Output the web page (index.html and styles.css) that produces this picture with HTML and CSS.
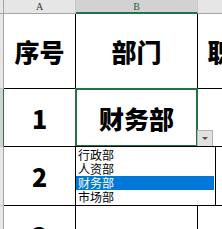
FILE: index.html
```html
<!DOCTYPE html>
<html lang="zh">
<head>
    <meta charset="UTF-8">
    <meta name="viewport" content="width=device-width, initial-scale=1.0">
    <title>部门</title>
    <link rel="stylesheet" href="styles.css">
</head>
<body>
    <div class="sheet">
        <div class="grid">
            <div class="corner"></div>
            <div class="colhead">A</div>
            <div class="colhead active">B</div>
            <div class="colhead">C</div>

            <div class="rowhead"></div>
            <div class="cell title">序号</div>
            <div class="cell title">部门</div>
            <div class="cell title">职位</div>

            <div class="rowhead active"></div>
            <div class="cell">1</div>
            <div class="cell selected">财务部</div>
            <div class="cell"></div>

            <div class="rowhead"></div>
            <div class="cell">2</div>
            <div class="cell"></div>
            <div class="cell"></div>

            <div class="rowhead"></div>
            <div class="cell">3</div>
            <div class="cell"></div>
            <div class="cell"></div>
        </div>

        <div class="dropBtn"></div>
        <ul class="dropList">
            <li>行政部</li>
            <li>人资部</li>
            <li class="on">财务部</li>
            <li>市场部</li>
        </ul>
    </div>
</body>
</html>
```

FILE: styles.css
```css
body {
    margin: 0;
    background: #fff;
}
.sheet {
    position: relative;
    width: 222px;
    height: 229px;
    overflow: hidden;
}
.grid {
    display: grid;
    grid-template-columns: 4px 72px 122px 70px;
    grid-template-rows: 14px 75px 58px 59px 58px;
}
.corner, .colhead, .rowhead {
    background: #e6e6e6;
    box-sizing: border-box;
}
.corner {
    border-right: 1px solid #a6a6a6;
    border-bottom: 1px solid #a6a6a6;
}
.colhead {
    border-right: 1px solid #c8c8c8;
    border-bottom: 1px solid #a6a6a6;
    font-family: "Liberation Serif", serif;
    font-size: 10px;
    line-height: 13px;
    text-align: center;
    color: #333;
}
.colhead.active {
    background: #d2d2d2;
    border-bottom: 2px solid #217346;
    color: #1e5e3a;
}
.rowhead {
    border-right: 1px solid #a6a6a6;
    border-bottom: 1px solid #c8c8c8;
}
.rowhead.active {
    background: #d2d2d2;
    border-right: 1px solid #217346;
}
.cell {
    position: relative;
    box-sizing: border-box;
    border-right: 1px solid #000;
    border-bottom: 1px solid #000;
    display: flex;
    justify-content: center;
    align-items: center;
    font-family: "Noto Sans CJK SC", sans-serif;
    font-weight: 900;
    font-size: 25px;
    color: #000;
    white-space: nowrap;
}
.cell.selected::after {
    content: '';
    position: absolute;
    top: -1px;
    left: -1px;
    right: -1px;
    bottom: -1px;
    border: 2px solid #217346;
}
.dropBtn {
    position: absolute;
    left: 197px;
    top: 130px;
    width: 14px;
    height: 15px;
    background: #e1e1e1;
    border: 1px solid #b4b4b4;
}
.dropBtn::after {
    content: '';
    position: absolute;
    left: 4px;
    top: 6px;
    border-left: 3px solid transparent;
    border-right: 3px solid transparent;
    border-top: 3px solid #555;
}
.dropList {
    position: absolute;
    left: 75px;
    top: 146px;
    width: 138px;
    margin: 0;
    padding: 1px 1px 1px 0;
    list-style: none;
    background: #fff;
    border: 1px solid #000;
}
.dropList li {
    height: 14px;
    line-height: 14px;
    padding-left: 2px;
    font-family: "Noto Sans CJK SC", sans-serif;
    font-size: 12px;
    color: #000;
}
.dropList li.on {
    background: #0078d7;
    color: #fff;
}
```
